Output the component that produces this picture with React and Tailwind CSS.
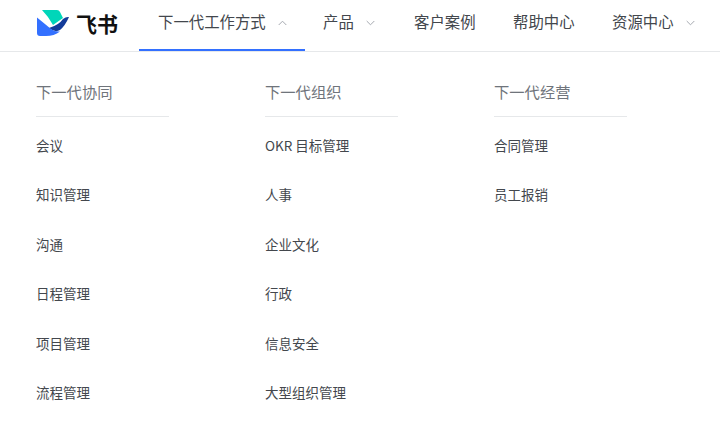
const FONT = { fontFamily: '"Noto Sans CJK SC", "Noto Sans", sans-serif' };

const COLUMNS = [
  { title: "下一代协同", items: ["会议", "知识管理", "沟通", "日程管理", "项目管理", "流程管理"] },
  { title: "下一代组织", items: ["OKR 目标管理", "人事", "企业文化", "行政", "信息安全", "大型组织管理"] },
  { title: "下一代经营", items: ["合同管理", "员工报销"] },
];

function Chevron({ up }) {
  return (
    <svg width="9" height="6" viewBox="0 0 9 6" fill="none" stroke="#a5a9b0" strokeWidth="1" className="ml-[12px] mt-[3px]">
      <path d={up ? "M0.7 5 L4.5 1.2 L8.3 5" : "M0.7 1 L4.5 4.8 L8.3 1"} />
    </svg>
  );
}

function Logo() {
  return (
    <svg width="33" height="26" viewBox="0 0 33 26" className="shrink-0">
      <path d="M5 0 H20 Q22 0 23 2 L26 8 L16 15 Q11 6 5 0 Z" fill="#00d6b9" />
      <path d="M12 18 Q22 15 26 9 Q29 6.5 32 7 Q28 16 23 20 Q18 23 12 18 Z" fill="#133c9a" />
      <path d="M0 7.5 Q8 14 14 19 Q18 22 23 21.5 Q17 26 9 26 H3 Q0 26 0 23 Z" fill="#3370ff" />
    </svg>
  );
}

function NavItem({ label, active, chevron, up, className }) {
  return (
    <div className={`relative flex h-[51px] shrink-0 items-center pb-[9px] ${className}`}>
      <span className="text-[15.4px] leading-6 text-[#43474d]">{label}</span>
      {chevron && <Chevron up={up} />}
      {active && <div className="absolute bottom-0 left-0 h-[2px] w-full bg-[#3370ff]" />}
    </div>
  );
}

export default function App() {
  return (
    <div className="h-[434px] w-[720px] overflow-hidden bg-white" style={FONT}>
      <header className="flex h-[52px] items-start border-b border-[#e6e8ea]">
        <div className="flex h-[51px] w-[139px] shrink-0 items-center pb-[5px] pl-[37px]">
          <Logo />
          <span className="ml-[6px] text-[21px] font-bold leading-6 text-[#111]">飞书</span>
        </div>
        <NavItem label="下一代工作方式" active chevron up className="w-[166px] pl-[19px]" />
        <NavItem label="产品" chevron className="ml-[18px] w-[91px]" />
        <NavItem label="客户案例" className="w-[99px]" />
        <NavItem label="帮助中心" className="w-[99px]" />
        <NavItem label="资源中心" chevron />
      </header>
      <main className="flex pl-9 pt-[27px]">
        {COLUMNS.map((col) => (
          <section key={col.title} className="w-[229px] shrink-0">
            <h2 className="w-[133px] border-b border-[#e6e8ea] pb-[13px] text-[15.3px] font-normal leading-6 text-[#6f747b]">{col.title}</h2>
            <ul className="mt-[3px]">
              {col.items.map((item) => (
                <li key={item} className="flex h-[49.5px] items-center text-[13.5px] text-[#43474d]">{item}</li>
              ))}
            </ul>
          </section>
        ))}
      </main>
    </div>
  );
}
